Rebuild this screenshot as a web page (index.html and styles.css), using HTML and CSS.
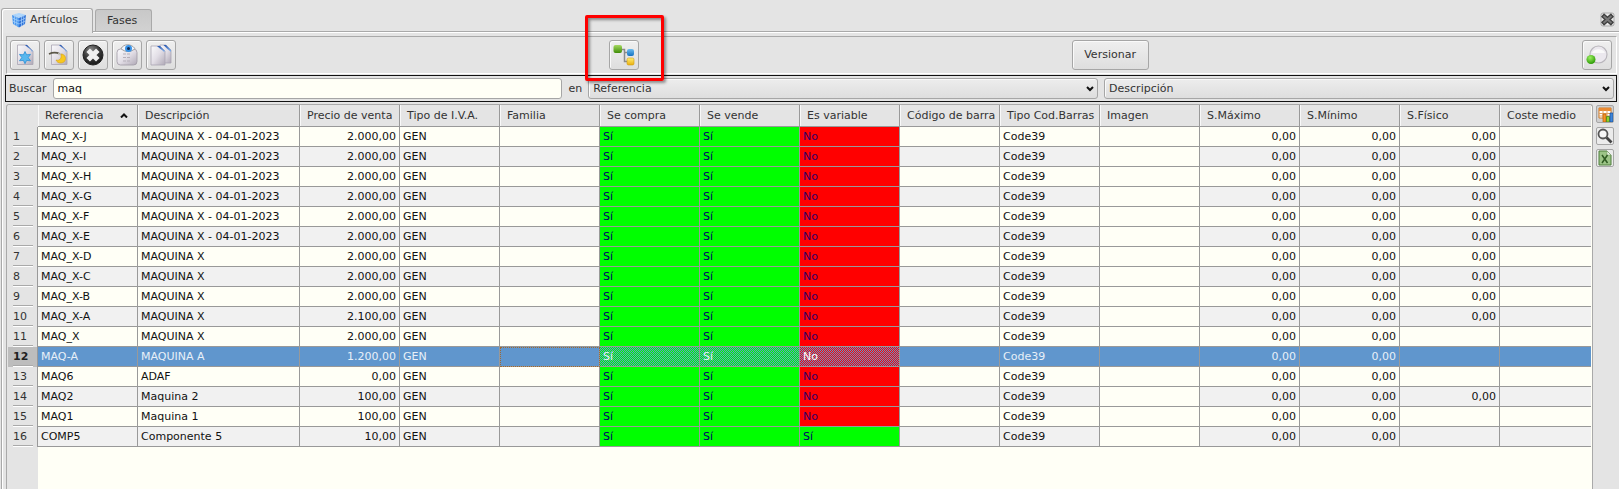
FILE: index.html
```html
<!DOCTYPE html>
<html lang="es">
<head>
<meta charset="utf-8">
<title>Artículos</title>
<link rel="stylesheet" href="styles.css">
</head>
<body>
<svg class="defs" width="0" height="0" aria-hidden="true">
  <defs>
    <linearGradient id="paper" x1="0" y1="0" x2="1" y2="1"><stop offset="0" stop-color="#fafafc"/><stop offset=".5" stop-color="#e2dee6"/><stop offset="1" stop-color="#b0a9b6"/></linearGradient>
    <linearGradient id="fold" x1="0" y1="0" x2="1" y2="1"><stop offset="0" stop-color="#1d4fae"/><stop offset="1" stop-color="#8ab8f0"/></linearGradient>
    <radialGradient id="ball" cx=".4" cy=".25" r=".8"><stop offset="0" stop-color="#8a8a8a"/><stop offset=".5" stop-color="#3a3a3a"/><stop offset="1" stop-color="#151515"/></radialGradient>
    <linearGradient id="green" x1="0" y1="0" x2="0" y2="1"><stop offset="0" stop-color="#a5d860"/><stop offset="1" stop-color="#3f8d08"/></linearGradient>
    <linearGradient id="blue" x1="0" y1="0" x2="0" y2="1"><stop offset="0" stop-color="#6cbcf0"/><stop offset="1" stop-color="#1672c0"/></linearGradient>
    <linearGradient id="yellow" x1="0" y1="0" x2="0" y2="1"><stop offset="0" stop-color="#ffee70"/><stop offset="1" stop-color="#eab010"/></linearGradient>
    <radialGradient id="led" cx=".4" cy=".3" r=".7"><stop offset="0" stop-color="#9cf060"/><stop offset="1" stop-color="#2c9a06"/></radialGradient>
  </defs>
</svg>

<header class="tabs">
  <nav class="tab-list">
    <button class="tab tab-active" type="button">
      <svg width="16" height="16" viewBox="0 0 16 16"><path d="M1 3 8 1l7 2-6 3z" fill="#a9d3fb"/><path d="M1 3l7 3v9.500L2 12z" fill="#4a97ee"/><path d="M8 6l7-3-1 9-6 3.500z" fill="#2f72d8"/><path d="M3.500 4v8.700M5.800 5v9M1.300 6l6.700 3 6.700-3M1.600 9l6.400 3 6.400-3M10.500 5v9M12.700 4v8.700M4.500 2l7 3M11.500 2l-7 3" stroke="#b7dbff" stroke-width=".6" fill="none"/></svg>
      Artículos
    </button>
    <button class="tab" type="button">Fases</button>
  </nav>
  <button class="close" type="button" aria-label="Cerrar">
    <svg width="15" height="15" viewBox="0 0 15 15"><rect x="1" y="1" width="13" height="13" rx="2" fill="#e8e8e8" stroke="#aaa"/><path d="M2.500 3l10 9m0-9l-10 9" stroke="#3f3f3f" stroke-width="4.500"/><path d="M3.500 4l8 7m0-7l-8 7" stroke="#777" stroke-width="2"/></svg>
  </button>
</header>

<main class="pane">
  <div class="toolbar">
    <div class="tool-group">
      <button class="tool" type="button" aria-label="Nuevo">
        <svg width="22" height="22" viewBox="0 0 22 22"><path d="M3.500 1H13l6 6v13.500H3.500z" fill="url(#paper)" stroke="#aaa4b2" stroke-width=".8"/><path d="M11 1h2l6 6-1 1c-1-3-4-4-7-7z" fill="url(#fold)"/><path d="M11 7.500l1.600 3.300 3.900-.4-2.300 3.200 2.300 3.200-3.900-.4L11 19.700l-1.600-3.300-3.900.4 2.300-3.200-2.300-3.200 3.900.4z" fill="#58b7ee" stroke="#2c8fd6" stroke-width=".8"/></svg>
      </button>
      <button class="tool" type="button" aria-label="Editar">
        <svg width="22" height="22" viewBox="0 0 22 22"><path d="M3.500 1H13l6 6v13.500H3.500z" fill="url(#paper)" stroke="#aaa4b2" stroke-width=".8"/><path d="M11 1h2l6 6-1 1c-1-3-4-4-7-7z" fill="url(#fold)"/><path d="M1 10c4-2 7-2 11 0" stroke="#5b5748" stroke-width="1.600" fill="none"/><path d="M10 10l5 1" stroke="#c8c6c0" stroke-width="2"/><path d="M13 10c6 0 6 9 0 9-3 0-4-1-5-3 3 1 6-1 5-6z" fill="#f8c820" stroke="#d9a210" stroke-width=".6"/></svg>
      </button>
      <button class="tool" type="button" aria-label="Eliminar">
        <svg width="24" height="24" viewBox="0 0 24 24"><circle cx="12" cy="12" r="10" fill="url(#ball)" stroke="#222"/><path d="M7.200 7.200l9.600 9.600m0-9.600l-9.600 9.600" stroke="#f0f0f0" stroke-width="5"/></svg>
      </button>
      <button class="tool" type="button" aria-label="Ver">
        <svg width="24" height="24" viewBox="0 0 24 24"><rect x="2" y="6" width="20" height="16" rx="3.500" fill="url(#paper)" stroke="#9f99a5" stroke-width=".8"/><path d="M8 11h7M8 14.500h7M8 18h7" stroke="#b5afb9" stroke-dasharray="3 1"/><path d="M6 5.500C9 .5 16 .5 20 5.500c-4 4-10 4-14 0z" fill="#f3f5fa" stroke="#888" stroke-width=".8"/><circle cx="13.500" cy="5.500" r="3.500" fill="#3993e8"/><circle cx="13.500" cy="5.500" r="1.500" fill="#0e2850"/></svg>
      </button>
      <button class="tool" type="button" aria-label="Copiar">
        <svg width="24" height="24" viewBox="0 0 24 24"><path d="M11 2h6l5 5v13H11z" fill="url(#paper)" stroke="#aaa4b2" stroke-width=".8"/><path d="M14.500 2H17l5 5v2c-2-2-5-4-7.500-7z" fill="url(#fold)"/><path d="M2 3h9l5 5v14H2z" fill="url(#paper)" stroke="#aaa4b2" stroke-width=".8"/><path d="M8 3h3l5 5-1 1c-1-2-4-3-7-6z" fill="url(#fold)"/></svg>
      </button>
    </div>
    <div class="marked">
      <button class="tool" type="button" aria-label="Estructura">
        <svg width="24" height="24" viewBox="0 0 24 24"><path d="M10 6.500h2.500v12H16M12.500 9.500H16" stroke="#8b8b8b" stroke-width="1.500" fill="none"/><rect x="1.500" y="2" width="8.500" height="8" rx="2" fill="url(#green)"/><rect x="15" y="6" width="7" height="7" rx="2" fill="url(#blue)"/><rect x="15" y="15" width="7" height="7" rx="1.500" fill="url(#yellow)" stroke="#cf9a14" stroke-width=".6"/></svg>
      </button>
      <span class="mark"></span>
    </div>
    <button class="tool tool-text" type="button">Versionar</button>
    <button class="tool" type="button" aria-label="Estado">
      <svg width="24" height="24" viewBox="0 0 24 24"><circle cx="13.500" cy="11.500" r="8.500" fill="#ebe8ee" stroke="#b9b6bc" stroke-width="1.200"/><path d="M7 10a7 6 0 0 1 13 0z" fill="#fafafa"/><circle cx="6" cy="16.500" r="4.500" fill="url(#led)"/></svg>
    </button>
  </div>

  <form class="search">
    <label for="q">Buscar</label>
    <input class="field" id="q" type="text" value="maq">
    <label for="f1">en</label>
    <span class="combo"><select class="field" id="f1"><option>Referencia</option></select><svg class="arrow" width="8" height="6" viewBox="0 0 8 6"><path d="M1 1l3 3 3-3" stroke="#111" stroke-width="2" fill="none"/></svg></span>
    <span class="combo"><select class="field" aria-label="Segundo campo"><option>Descripción</option></select><svg class="arrow" width="8" height="6" viewBox="0 0 8 6"><path d="M1 1l3 3 3-3" stroke="#111" stroke-width="2" fill="none"/></svg></span>
  </form>

  <div class="content">
    <div class="grid">
      <table>
        <colgroup><col class="c-num"><col class="c-std"><col class="c-desc"><col class="c-std" span="12"><col></colgroup>
        <thead>
          <tr><td></td><th scope="col"><span class="sorted">Referencia<svg width="8" height="5" viewBox="0 0 8 5"><path d="M1 4.500l3-3 3 3" stroke="#111" stroke-width="2" fill="none"/></svg></span></th><th scope="col">Descripción</th><th scope="col">Precio de venta</th><th scope="col">Tipo de I.V.A.</th><th scope="col">Familia</th><th scope="col">Se compra</th><th scope="col">Se vende</th><th scope="col">Es variable</th><th scope="col">Código de barra</th><th scope="col">Tipo Cod.Barras</th><th scope="col">Imagen</th><th scope="col">S.Máximo</th><th scope="col">S.Mínimo</th><th scope="col">S.Físico</th><th scope="col">Coste medio</th></tr>
        </thead>
        <tbody>
          <tr><th scope="row">1</th><td>MAQ_X-J</td><td>MAQUINA X - 04-01-2023</td><td class="num">2.000,00</td><td>GEN</td><td></td><td class="yes">Sí</td><td class="yes">Sí</td><td class="no">No</td><td></td><td>Code39</td><td class="img"></td><td class="num">0,00</td><td class="num">0,00</td><td class="num">0,00</td><td></td></tr>
          <tr><th scope="row">2</th><td>MAQ_X-I</td><td>MAQUINA X - 04-01-2023</td><td class="num">2.000,00</td><td>GEN</td><td></td><td class="yes">Sí</td><td class="yes">Sí</td><td class="no">No</td><td></td><td>Code39</td><td class="img"></td><td class="num">0,00</td><td class="num">0,00</td><td class="num">0,00</td><td></td></tr>
          <tr><th scope="row">3</th><td>MAQ_X-H</td><td>MAQUINA X - 04-01-2023</td><td class="num">2.000,00</td><td>GEN</td><td></td><td class="yes">Sí</td><td class="yes">Sí</td><td class="no">No</td><td></td><td>Code39</td><td class="img"></td><td class="num">0,00</td><td class="num">0,00</td><td class="num">0,00</td><td></td></tr>
          <tr><th scope="row">4</th><td>MAQ_X-G</td><td>MAQUINA X - 04-01-2023</td><td class="num">2.000,00</td><td>GEN</td><td></td><td class="yes">Sí</td><td class="yes">Sí</td><td class="no">No</td><td></td><td>Code39</td><td class="img"></td><td class="num">0,00</td><td class="num">0,00</td><td class="num">0,00</td><td></td></tr>
          <tr><th scope="row">5</th><td>MAQ_X-F</td><td>MAQUINA X - 04-01-2023</td><td class="num">2.000,00</td><td>GEN</td><td></td><td class="yes">Sí</td><td class="yes">Sí</td><td class="no">No</td><td></td><td>Code39</td><td class="img"></td><td class="num">0,00</td><td class="num">0,00</td><td class="num">0,00</td><td></td></tr>
          <tr><th scope="row">6</th><td>MAQ_X-E</td><td>MAQUINA X - 04-01-2023</td><td class="num">2.000,00</td><td>GEN</td><td></td><td class="yes">Sí</td><td class="yes">Sí</td><td class="no">No</td><td></td><td>Code39</td><td class="img"></td><td class="num">0,00</td><td class="num">0,00</td><td class="num">0,00</td><td></td></tr>
          <tr><th scope="row">7</th><td>MAQ_X-D</td><td>MAQUINA X</td><td class="num">2.000,00</td><td>GEN</td><td></td><td class="yes">Sí</td><td class="yes">Sí</td><td class="no">No</td><td></td><td>Code39</td><td class="img"></td><td class="num">0,00</td><td class="num">0,00</td><td class="num">0,00</td><td></td></tr>
          <tr><th scope="row">8</th><td>MAQ_X-C</td><td>MAQUINA X</td><td class="num">2.000,00</td><td>GEN</td><td></td><td class="yes">Sí</td><td class="yes">Sí</td><td class="no">No</td><td></td><td>Code39</td><td class="img"></td><td class="num">0,00</td><td class="num">0,00</td><td class="num">0,00</td><td></td></tr>
          <tr><th scope="row">9</th><td>MAQ_X-B</td><td>MAQUINA X</td><td class="num">2.000,00</td><td>GEN</td><td></td><td class="yes">Sí</td><td class="yes">Sí</td><td class="no">No</td><td></td><td>Code39</td><td class="img"></td><td class="num">0,00</td><td class="num">0,00</td><td class="num">0,00</td><td></td></tr>
          <tr><th scope="row">10</th><td>MAQ_X-A</td><td>MAQUINA X</td><td class="num">2.100,00</td><td>GEN</td><td></td><td class="yes">Sí</td><td class="yes">Sí</td><td class="no">No</td><td></td><td>Code39</td><td class="img"></td><td class="num">0,00</td><td class="num">0,00</td><td class="num">0,00</td><td></td></tr>
          <tr><th scope="row">11</th><td>MAQ_X</td><td>MAQUINA X</td><td class="num">2.000,00</td><td>GEN</td><td></td><td class="yes">Sí</td><td class="yes">Sí</td><td class="no">No</td><td></td><td>Code39</td><td class="img"></td><td class="num">0,00</td><td class="num">0,00</td><td class="num"></td><td></td></tr>
          <tr class="selected"><th scope="row">12</th><td>MAQ-A</td><td>MAQUINA A</td><td class="num">1.200,00</td><td>GEN</td><td class="current"></td><td class="yes">Sí</td><td class="yes">Sí</td><td class="no">No</td><td></td><td>Code39</td><td class="img"></td><td class="num">0,00</td><td class="num">0,00</td><td class="num"></td><td></td></tr>
          <tr><th scope="row">13</th><td>MAQ6</td><td>ADAF</td><td class="num">0,00</td><td>GEN</td><td></td><td class="yes">Sí</td><td class="yes">Sí</td><td class="no">No</td><td></td><td>Code39</td><td class="img"></td><td class="num">0,00</td><td class="num">0,00</td><td class="num"></td><td></td></tr>
          <tr><th scope="row">14</th><td>MAQ2</td><td>Maquina 2</td><td class="num">100,00</td><td>GEN</td><td></td><td class="yes">Sí</td><td class="yes">Sí</td><td class="no">No</td><td></td><td>Code39</td><td class="img"></td><td class="num">0,00</td><td class="num">0,00</td><td class="num">0,00</td><td></td></tr>
          <tr><th scope="row">15</th><td>MAQ1</td><td>Maquina 1</td><td class="num">100,00</td><td>GEN</td><td></td><td class="yes">Sí</td><td class="yes">Sí</td><td class="no">No</td><td></td><td>Code39</td><td class="img"></td><td class="num">0,00</td><td class="num">0,00</td><td class="num"></td><td></td></tr>
          <tr><th scope="row">16</th><td>COMP5</td><td>Componente 5</td><td class="num">10,00</td><td>GEN</td><td></td><td class="yes">Sí</td><td class="yes">Sí</td><td class="yes">Sí</td><td></td><td>Code39</td><td class="img"></td><td class="num">0,00</td><td class="num">0,00</td><td class="num"></td><td></td></tr>
        </tbody>
      </table>
    </div>
    <aside class="side">
      <button class="mini mini-on" type="button" aria-label="Columnas">
        <svg width="16" height="16" viewBox="0 0 16 16"><path d="M2 2h12v10H2z" fill="#fff" stroke="#cf7a25"/><path d="M2 2h12v3H2z" fill="#e98a33"/><path d="M2 7.500h12M2 10h12M6 4v8M10 4v8" stroke="#e0a060"/><path d="M6 8h3v8H6z" fill="#f29426" stroke="#b85c08" stroke-width=".7"/><path d="M9.500 10.500h3V16h-3z" fill="#8fd02c" stroke="#3f7c0a" stroke-width=".7"/><path d="M13 7h3v9h-3z" fill="#3f86d8" stroke="#174f9c" stroke-width=".7"/></svg>
      </button>
      <button class="mini" type="button" aria-label="Buscar">
        <svg width="16" height="16" viewBox="0 0 16 16"><path d="M9.500 9.500l5 5" stroke="#444" stroke-width="2.800"/><circle cx="6" cy="6" r="4.500" fill="#f6f6f6" stroke="#555" stroke-width="1.800"/></svg>
      </button>
      <button class="mini" type="button" aria-label="Exportar a hoja de cálculo">
        <svg width="16" height="16" viewBox="0 0 16 16"><path d="M2 1h8l4 4v10H2z" fill="#9cc487" stroke="#4e7f3c"/><path d="M10 1v4h4z" fill="#eef5ea" stroke="#7da36c" stroke-width=".6"/><path d="M5 5l5.500 8M10.500 5L5 13" stroke="#2f5a22" stroke-width="1.500"/></svg>
      </button>
    </aside>
  </div>
</main>
</body>
</html>
```

FILE: styles.css
```css
* { box-sizing: border-box; }

body {
  margin: 0;
  height: 100vh;
  display: flex;
  flex-direction: column;
  overflow: hidden;
  background: #e4e4e4;
  color: #333;
  font: 11px/16px "DejaVu Sans", sans-serif;
}

button, input, select { font: inherit; color: inherit; }
svg { display: block; flex: none; }
.defs { position: absolute; }

/* Tabs */
.tabs {
  display: flex;
  justify-content: space-between;
  align-items: flex-end;
  padding: 8px 4px 0 1px;
}
.tab-list { display: flex; align-items: flex-end; gap: 2px; }
.tab {
  height: 22px;
  padding: 0 14px 0 11px;
  border: 1px solid #a9a9a9;
  border-bottom: 0;
  border-radius: 3px 3px 0 0;
  background: linear-gradient(#c8c8c8, #d2d2d2);
}
.tab-active {
  position: relative;
  z-index: 1;
  display: flex;
  align-items: center;
  gap: 3px;
  height: 25px;
  margin-bottom: -2px;
  padding: 0 14px 2px 9px;
  background: #e6e6e6;
  box-shadow: inset 1px 1px #fff;
}
.close { margin-bottom: 4px; padding: 0; border: 0; background: none; }

/* Pane */
.pane {
  flex: 1;
  min-height: 0;
  display: flex;
  flex-direction: column;
  margin-left: 1px;
  padding: 4px 2px 0 3px;
  border: solid #a9a9a9;
  border-width: 1px 0 0 1px;
  box-shadow: inset 1px 1px #fff;
}

/* Toolbar */
.toolbar {
  display: flex;
  justify-content: space-between;
  align-items: center;
  margin: 0 0 1px 1px;
  padding: 3px 4px 3px 3px;
  border: 1px solid #a9a9a9;
  border-right-color: #fff;
  border-bottom-color: #fff;
}
.tool-group { display: flex; gap: 4px; }
.tool {
  display: grid;
  place-items: center;
  width: 30px;
  height: 30px;
  padding: 0;
  border: 1px solid #a6a6a6;
  border-radius: 3px;
  background: linear-gradient(#efefef, #dedede);
  box-shadow: inset 1px 1px #fafafa;
}
.tool-text { width: auto; padding: 0 12px 0 11px; }
.marked { position: relative; }
.mark {
  position: absolute;
  z-index: 2;
  inset: -25px -25px -11px -24px;
  border: 3px solid #f00;
  border-radius: 2px;
  box-shadow: 2px 2px 3px #0006, inset 2px 2px 3px #0006;
  pointer-events: none;
}

/* Search */
.search {
  display: grid;
  grid-template-columns: auto 1fr auto 1fr 1fr;
  align-items: center;
  gap: 6px;
  padding: 2px 2px 2px 3px;
  border: 1px solid #111;
}
.field {
  width: 100%;
  min-width: 0;
  height: 21px;
  padding: 0 4px;
  border: 1px solid #a6a6a6;
  border-radius: 3px;
  background: #fffff6;
  color: #111;
}
.combo { position: relative; display: flex; min-width: 0; }
.combo .field {
  appearance: none;
  background: linear-gradient(#ededed, #dedede);
  box-shadow: inset 1px 1px #fafafa;
  color: #333;
}
.arrow { position: absolute; right: 4px; top: 8px; pointer-events: none; }

/* Data grid */
.content { flex: 1; min-height: 0; display: flex; gap: 3px; padding: 2px 0 0 1px; }
.grid {
  flex: 1;
  min-width: 0;
  overflow: hidden;
  border: solid #a9a9a9;
  border-width: 1px 1px 0;
  border-radius: 3px 3px 0 0;
  padding: 0 1px;
  background: linear-gradient(90deg, #e4e4e4 31px, #fffff6 31px);
}
table { width: 100%; table-layout: fixed; border-collapse: separate; border-spacing: 0; }
.c-num { width: 30px; }
.c-std { width: 100px; }
.c-desc { width: 162px; }
td, th { padding: 0; font-weight: normal; text-align: left; white-space: nowrap; overflow: hidden; }
thead td, thead th { height: 22px; background: #e4e4e4; border-bottom: 1px solid #999; }
thead td { border-bottom-color: #e4e4e4; }
thead th { padding-left: 7px; border-right: 1px solid #999; box-shadow: inset 1px 0 #f8f8f8; }
.sorted { display: flex; align-items: center; justify-content: space-between; padding-right: 9px; }
tbody td {
  height: 20px;
  padding: 0 3px;
  border: solid #999;
  border-width: 0 1px 1px 0;
  background: #fffff6;
  color: #111;
}
tr > :last-child { border-right: 0; }
tbody tr:nth-child(even) td { background: #f1f1f1; }
tbody tr td.img { background: #fffff6; }
tbody th {
  padding-left: 5px;
  background: linear-gradient(#a9a9a9, #a9a9a9) 5px 18px / 20px 1px no-repeat, linear-gradient(#fff, #fff) 5px 19px / 20px 1px no-repeat, #e4e4e4;
  border-right: 1px solid #999;
}
td.num { text-align: right; }
tbody tr td.yes { background: #0f0; color: #006; }
tbody tr td.no { background: #f00; color: #306; }
tbody tr.selected td { background: #6096cd; color: #e8f0f8; }
tbody tr.selected td.yes { background: repeating-conic-gradient(#6096cd 0 25%, #0f0 0 50%) 0 0 / 2px 2px; }
tbody tr.selected td.no { background: repeating-conic-gradient(#6096cd 0 25%, #f00 0 50%) 0 0 / 2px 2px; color: #fff; }
tbody tr.selected td.current { outline: 1px dotted #9f6932; outline-offset: -1px; }
tbody tr.selected td.img { background: #6096cd; }
.selected th { font-weight: bold; background-color: #bdbdbd; color: #222; }

/* Side buttons */
.side { display: flex; flex-direction: column; gap: 4px; padding: 1px 3px 0 0; }
.grid + .side { margin-left: 0; }
.mini {
  display: grid;
  place-items: center;
  width: 18px;
  height: 18px;
  padding: 0;
  border: 1px solid #a6a6a6;
  border-radius: 2px;
  background: #ececec;
}
.mini-on { background: #cfcfcf; }
```
